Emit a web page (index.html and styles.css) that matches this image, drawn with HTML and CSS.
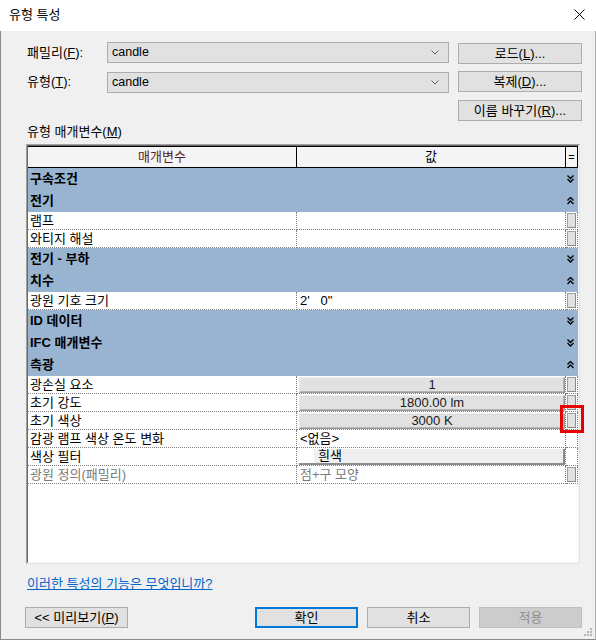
FILE: index.html
```html
<!DOCTYPE html>
<html lang="ko">
<head>
<meta charset="utf-8">
<title>유형 특성</title>
<link rel="stylesheet" href="styles.css">
</head>
<body>
<div class="window">
  <div class="titlebar">
    <span class="title">유형 특성</span>
    <svg class="close" width="11" height="11" viewBox="0 0 11 11"><path d="M0.5 0.5 L10.5 10.5 M10.5 0.5 L0.5 10.5" stroke="#000" stroke-width="1" fill="none"/></svg>
  </div>
  <div class="content">
    <div class="form">
      <div class="lbl">패밀리(<u>F</u>):</div>
      <div class="combo"><span class="ctext">candle</span><svg class="chev" width="8" height="5" viewBox="0 0 8 5"><path d="M0.5 0.5 L4 4 L7.5 0.5" stroke="#606060" stroke-width="1" fill="none"/></svg></div>
      <button class="btn btn-top1">로드(<u>L</u>)...</button>
      <div class="lbl">유형(<u>T</u>):</div>
      <div class="combo combo2"><span class="ctext">candle</span><svg class="chev" width="8" height="5" viewBox="0 0 8 5"><path d="M0.5 0.5 L4 4 L7.5 0.5" stroke="#606060" stroke-width="1" fill="none"/></svg></div>
      <button class="btn">복제(<u>D</u>)...</button>
      <button class="btn btn-rename">이름 바꾸기(<u>R</u>)...</button>
    </div>
    <div class="section-label">유형 매개변수(<u>M</u>)</div>
    <div class="frame">
      <div class="grid">
        <div class="row head">
          <div class="hc sorted">매개변수</div>
          <div class="hc">값</div>
          <div class="hc eq">=</div>
        </div>

        <div class="row group"><div class="gname">구속조건</div><div class="gchev"><svg width="7" height="8" viewBox="0 0 7 8"><path d="M0.5 0.5 L3.5 3.5 L6.5 0.5 M0.5 4 L3.5 7 L6.5 4" stroke="#000" stroke-width="1.4" fill="none"/></svg></div></div>
        <div class="row group"><div class="gname">전기</div><div class="gchev"><svg width="7" height="8" viewBox="0 0 7 8"><path d="M0.5 3.5 L3.5 0.5 L6.5 3.5 M0.5 7 L3.5 4 L6.5 7" stroke="#000" stroke-width="1.4" fill="none"/></svg></div></div>
        <div class="row data"><div class="c1">램프</div><div class="c2"></div><div class="c3"><span class="pbtn"></span></div></div>
        <div class="row data"><div class="c1">와티지 해설</div><div class="c2"></div><div class="c3"><span class="pbtn"></span></div></div>

        <div class="row group"><div class="gname">전기 - 부하</div><div class="gchev"><svg width="7" height="8" viewBox="0 0 7 8"><path d="M0.5 0.5 L3.5 3.5 L6.5 0.5 M0.5 4 L3.5 7 L6.5 4" stroke="#000" stroke-width="1.4" fill="none"/></svg></div></div>
        <div class="row group"><div class="gname">치수</div><div class="gchev"><svg width="7" height="8" viewBox="0 0 7 8"><path d="M0.5 3.5 L3.5 0.5 L6.5 3.5 M0.5 7 L3.5 4 L6.5 7" stroke="#000" stroke-width="1.4" fill="none"/></svg></div></div>
        <div class="row data"><div class="c1">광원 기호 크기</div><div class="c2 val">2'&nbsp;&nbsp;&nbsp;0"</div><div class="c3"><span class="pbtn"></span></div></div>

        <div class="row group"><div class="gname">ID 데이터</div><div class="gchev"><svg width="7" height="8" viewBox="0 0 7 8"><path d="M0.5 0.5 L3.5 3.5 L6.5 0.5 M0.5 4 L3.5 7 L6.5 4" stroke="#000" stroke-width="1.4" fill="none"/></svg></div></div>
        <div class="row group"><div class="gname">IFC 매개변수</div><div class="gchev"><svg width="7" height="8" viewBox="0 0 7 8"><path d="M0.5 0.5 L3.5 3.5 L6.5 0.5 M0.5 4 L3.5 7 L6.5 4" stroke="#000" stroke-width="1.4" fill="none"/></svg></div></div>
        <div class="row group"><div class="gname">측광</div><div class="gchev"><svg width="7" height="8" viewBox="0 0 7 8"><path d="M0.5 3.5 L3.5 0.5 L6.5 3.5 M0.5 7 L3.5 4 L6.5 7" stroke="#000" stroke-width="1.4" fill="none"/></svg></div></div>
        <div class="row data"><div class="c1">광손실 요소</div><div class="c2"><div class="vbox">1</div></div><div class="c3"><span class="pbtn"></span></div></div>
        <div class="row data"><div class="c1">초기 강도</div><div class="c2"><div class="vbox">1800.00 lm</div></div><div class="c3"><span class="pbtn"></span></div></div>
        <div class="row data"><div class="c1">초기 색상</div><div class="c2"><div class="vbox">3000 K</div></div><div class="c3"><span class="pbtn"></span></div></div>
        <div class="row data"><div class="c1">감광 램프 색상 온도 변화</div><div class="c2 val">&lt;없음&gt;</div><div class="c3"></div></div>
        <div class="row data"><div class="c1">색상 필터</div><div class="c2"><div class="colorbox"><span class="swatch"></span><span class="cname">흰색</span></div></div><div class="c3"></div></div>
        <div class="row data dim"><div class="c1">광원 정의(패밀리)</div><div class="c2 val">점+구 모양</div><div class="c3"><span class="pbtn"></span></div></div>
      </div>
    </div>
    <a class="help" href="#">이러한 특성의 기능은 무엇입니까?</a>
    <div class="buttons">
      <button class="btn bbtn preview">&lt;&lt; 미리보기(<u>P</u>)</button>
      <button class="btn bbtn ok">확인</button>
      <button class="btn bbtn">취소</button>
      <button class="btn bbtn disabled">적용</button>
    </div>
  </div>
  <svg class="grip" width="9" height="9" viewBox="0 0 9 9">
    <rect x="6" y="0" width="2" height="2" fill="#b4b4b4"/>
    <rect x="3" y="3" width="2" height="2" fill="#b4b4b4"/>
    <rect x="6" y="3" width="2" height="2" fill="#b4b4b4"/>
    <rect x="0" y="6" width="2" height="2" fill="#b4b4b4"/>
    <rect x="3" y="6" width="2" height="2" fill="#b4b4b4"/>
    <rect x="6" y="6" width="2" height="2" fill="#b4b4b4"/>
  </svg>
  <div class="redbox"></div>
</div>
</body>
</html>
```

FILE: styles.css
```css
* { box-sizing: border-box; }
html, body { margin: 0; padding: 0; }
body {
  font-family: "Liberation Sans", "Noto Sans CJK KR", sans-serif;
  font-size: 13px;
  color: #000;
  background: #f0f0f0;
}
.window {
  position: relative;
  width: 596px;
  height: 640px;
  background: #f0f0f0;
  display: flex;
  flex-direction: column;
}
.titlebar {
  height: 31px;
  background: #fff;
  display: flex;
  align-items: center;
  justify-content: space-between;
  padding: 0 11px 2px 9px;
}
.title { font-size: 13px; line-height: 16px; }
.close { display: block; }
.content {
  flex: 1;
  border-left: 1px solid #8a8a8a;
  border-right: 1px solid #b0b0b0;
  border-bottom: 1px solid #8a8a8a;
  padding: 11px 13px 0 26px;
  display: flex;
  flex-direction: column;
}
.form {
  display: grid;
  grid-template-columns: 80px 342px 1fr;
  grid-template-rows: 21px 21px 21px;
  row-gap: 8px;
}
.lbl { line-height: 21px; }
.combo {
  height: 21px;
  background: #e1e1e1;
  border: 1px solid #adadad;
  display: flex;
  align-items: center;
  justify-content: space-between;
  padding: 0 9px 0 4px;
  line-height: 19px;
}
.ctext { font-size: 12.5px; }
.combo2 { margin-top: 1px; }
.chev { display: block; }
.btn {
  font-family: inherit;
  font-size: 13px;
  color: #000;
  background: #e1e1e1;
  border: 1px solid #adadad;
  height: 21px;
  padding: 0;
  margin: 0;
  line-height: 19px;
}
.form .btn { width: 124px; justify-self: end; }
.btn-top1 { margin-top: 1px; }
.btn-rename { grid-column: 3; grid-row: 3; }
.section-label {
  margin-top: 3px;
  line-height: 16px;
  height: 16px;
  margin-bottom: 4px;
}
.frame {
  width: 554px;
  height: 420px;
  margin-left: -1px;
  border: 1px solid;
  border-color: #a0a0a0 #e3e3e3 #e3e3e3 #a0a0a0;
}
.grid {
  height: 100%;
  background: #fff;
  border: 1px solid;
  border-color: #696969 #f4f4f4 #f4f4f4 #696969;
  overflow: hidden;
}
.row { display: grid; grid-template-columns: 269px 269px 12px; }
.row.head {
  height: 22px;
  background: #f4f4f4;
  border-bottom: 1px solid #000;
  border-top: 1px solid #000;
}
.hc {
  text-align: center;
  line-height: 20px;
  border-right: 1px solid #000;
}
.hc.sorted { color: #5a1c1c; }
.hc.eq { font-size: 11px; }
.row.group {
  height: 22px;
  background: #99b4d1;
  grid-template-columns: 538px 12px;
}
.gname {
  font-weight: bold;
  line-height: 22px;
  padding-left: 2px;
}
.gchev {
  display: flex;
  align-items: center;
  padding-left: 1px;
}
.gchev svg { display: block; }
.row.data { height: 18px; }
.row.data > div {
  border-right: 1px dotted #808080;
  border-bottom: 1px dotted #808080;
  line-height: 17px;
  white-space: nowrap;
  overflow: hidden;
}
.c1 { padding-left: 2px; }
.c2.val { padding-left: 3px; }
.row.dim .c1, .row.dim .c2 { color: #7a7a7a; }
.vbox {
  margin: 1px 0 0 2px;
  height: 16px;
  background: #e1e1e1;
  border: 1px solid;
  border-color: #ececec #9a9a9a #9a9a9a #ececec;
  box-shadow: inset -1px -1px 0 #b4b4b4;
  text-align: center;
  line-height: 14px;
  color: #1a1a1a;
}
.colorbox {
  margin: 1px 0 0 2px;
  height: 16px;
  display: flex;
  border-right: 2px solid #8c8c8c;
  border-bottom: 2px solid #8c8c8c;
}
.swatch { width: 15px; background: #fff; }
.cname {
  flex: 1;
  background: #efefef;
  padding-left: 4px;
  line-height: 14px;
}
.pbtn {
  display: block;
  width: 9px;
  height: 15px;
  margin: 1px 0 0 1px;
  background: #e1e1e1;
  border: 1px solid #a0a0a0;
  border-right-color: #8a8a8a;
  border-bottom-color: #8a8a8a;
}
.help {
  margin-top: 12px;
  line-height: 16px;
  color: #0066cc;
  text-decoration: underline;
  align-self: flex-start;
}
.buttons {
  margin-top: 15px;
  display: flex;
  gap: 9px;
  margin-left: -2px;
}
.bbtn { width: 103px; }
.preview { margin-right: auto; }
.ok { border: 2px solid #0078d7; line-height: 17px; }
.disabled { background: #cccccc; border-color: #bfbfbf; color: #8d8d8d; }
.grip { position: absolute; right: 3px; bottom: 3px; }
.redbox {
  position: absolute;
  left: 560px;
  top: 405px;
  width: 24px;
  height: 28px;
  border: 3px solid #e60000;
}
```
